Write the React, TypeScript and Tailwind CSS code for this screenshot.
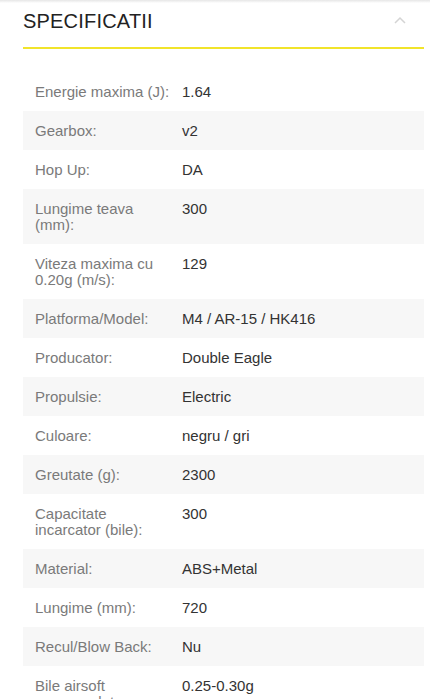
import React from "react";

const specs: [string, string][] = [
  ["Energie maxima (J):", "1.64"],
  ["Gearbox:", "v2"],
  ["Hop Up:", "DA"],
  ["Lungime teava (mm):", "300"],
  ["Viteza maxima cu 0.20g (m/s):", "129"],
  ["Platforma/Model:", "M4 / AR-15 / HK416"],
  ["Producator:", "Double Eagle"],
  ["Propulsie:", "Electric"],
  ["Culoare:", "negru / gri"],
  ["Greutate (g):", "2300"],
  ["Capacitate incarcator (bile):", "300"],
  ["Material:", "ABS+Metal"],
  ["Lungime (mm):", "720"],
  ["Recul/Blow Back:", "Nu"],
  ["Bile airsoft recomandate:", "0.25-0.30g"],
];

function App() {
  return (
    <div
      className="w-[430px] h-[699px] overflow-hidden bg-white"
      style={{ fontFamily: '"Liberation Sans", Arial, sans-serif' }}
    >
      <div className="h-[3px] bg-gradient-to-b from-[#e6e6e6] to-white" />
      <div className="pl-[23px] pr-[6px]">
        <div className="h-[35px] flex items-center justify-between">
          <h2 className="text-[20px] leading-none text-[#222] tracking-[0.2px]">SPECIFICATII</h2>
          <svg width="12" height="8" viewBox="0 0 12 8" className="mr-[18px] mb-[2px]">
            <polyline points="1,7 6,2 11,7" fill="none" stroke="#d4d4d4" strokeWidth="1.5" />
          </svg>
        </div>
        <div className="mt-[9px] h-[2px] bg-[#f1e42b]" />
        <div className="mt-[23px]">
          {specs.map(([label, value], i) => (
            <div
              key={label}
              className={`flex text-[15px] leading-[16px] py-[11.5px] ${i % 2 === 1 ? "bg-[#f7f7f7]" : "bg-white"}`}
            >
              <div className="w-[159px] shrink-0 pl-3 pr-[10px] text-[#7a7a7a]">{label}</div>
              <div className="text-[#333]">{value}</div>
            </div>
          ))}
        </div>
      </div>
    </div>
  );
}

export default App;
